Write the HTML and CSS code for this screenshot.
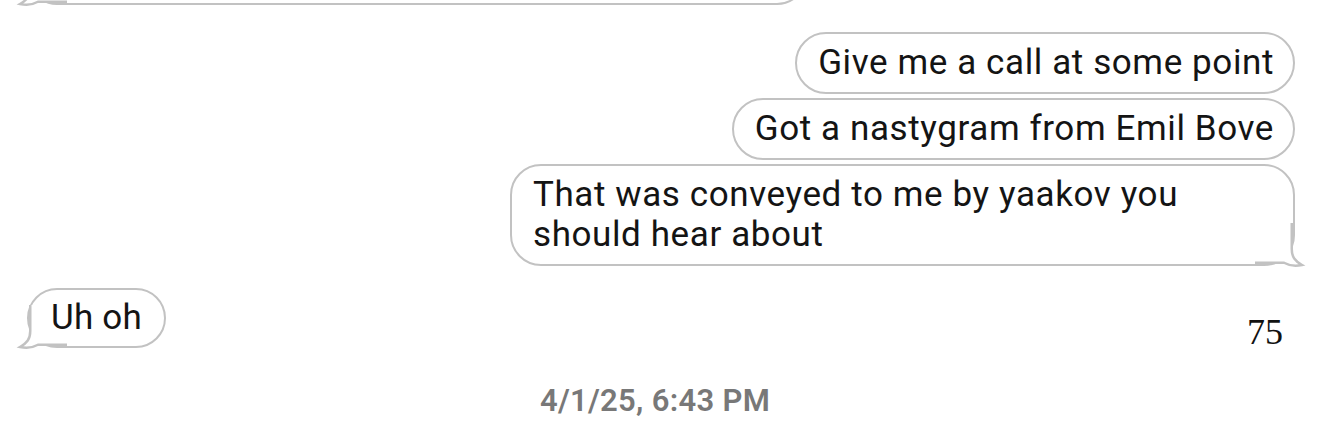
FILE: index.html
```html
<!DOCTYPE html>
<html>
<head>
<meta charset="utf-8">
<link rel="stylesheet" href="styles.css">
</head>
<body>
<div class="thread">
  <div class="row row-in">
    <div class="bubble bubble-cut">
      <svg class="tail tail-l" width="50" height="50" viewBox="0 0 50 50"><path class="tail-fill" d="M0 4 H36.75 V30 C36.75 38 40 42 47 46 C40 47.5 33 46 29 43.75 H0 Z"/><path class="tail-line" d="M36.75 4 V30 C36.75 38 40 42 47 46 C40 47.5 33 46 29 43.75 H0"/></svg>
    </div>
  </div>

  <div class="row row-out first-out">
    <div class="bubble"><span class="txt">Give me a call at some point</span></div>
  </div>
  <div class="row row-out tight">
    <div class="bubble"><span class="txt">Got a nastygram from Emil Bove</span></div>
  </div>
  <div class="row row-out tight">
    <div class="bubble bubble-wide">
      <span class="txt">That was conveyed to me by yaakov you should hear about</span>
      <svg class="tail tail-r" width="50" height="50" viewBox="0 0 50 50"><path class="tail-fill" d="M0 4 H36.75 V30 C36.75 38 40 42 47 46 C40 47.5 33 46 29 43.75 H0 Z"/><path class="tail-line" d="M36.75 4 V30 C36.75 38 40 42 47 46 C40 47.5 33 46 29 43.75 H0"/></svg>
    </div>
  </div>

  <div class="row row-in row-last">
    <div class="bubble bubble-small">
      <span class="txt">Uh oh</span>
      <svg class="tail tail-l" width="50" height="50" viewBox="0 0 50 50"><path class="tail-fill" d="M0 4 H36.75 V30 C36.75 38 40 42 47 46 C40 47.5 33 46 29 43.75 H0 Z"/><path class="tail-line" d="M36.75 4 V30 C36.75 38 40 42 47 46 C40 47.5 33 46 29 43.75 H0"/></svg>
    </div>
    <div class="page-num">75</div>
  </div>

  <div class="stamp">4/1/25, 6:43 PM</div>
</div>
</body>
</html>
```

FILE: styles.css
```css
html, body {
  margin: 0;
  padding: 0;
  background: #ffffff;
}

body {
  width: 1320px;
  height: 430px;
  overflow: hidden;
  font-family: Roboto, "Liberation Sans", Arial, sans-serif;
}

.thread {
  display: flex;
  flex-direction: column;
  padding: 0 25px 0 27px;
}

.row {
  display: flex;
}

.row-out {
  justify-content: flex-end;
}

.first-out {
  margin-top: 27px;
}

.tight {
  margin-top: 4px;
}

.bubble {
  position: relative;
  box-sizing: border-box;
  border: 2.5px solid #c2c2c2;
  border-radius: 31px;
  padding: 9px 19px 9px 21px;
  font-size: 35px;
  letter-spacing: 0.6px;
  line-height: 40px;
  color: #141414;
  background: #ffffff;
}

.txt {
  position: relative;
  z-index: 2;
}

.bubble-cut {
  width: 780px;
  height: 60px;
  margin-top: -55px;
}

.bubble-wide {
  width: 785px;
}

.row-last {
  margin-top: 22px;
  justify-content: space-between;
  align-items: flex-end;
}

.bubble-small {
  padding: 8px 22px 8px 22px;
  letter-spacing: 0.2px;
}

.tail {
  position: absolute;
  bottom: -5px;
  z-index: 1;
  overflow: visible;
}

.tail-r {
  right: -12px;
}

.tail-l {
  left: -12px;
  transform: scaleX(-1);
}

.tail-fill {
  fill: #ffffff;
}

.tail-line {
  fill: none;
  stroke: #c2c2c2;
  stroke-width: 2.5;
}

.page-num {
  font-family: "Liberation Serif", "Times New Roman", serif;
  font-size: 36px;
  line-height: 40px;
  color: #111111;
  margin-bottom: -4px;
  margin-right: 12px;
}

.stamp {
  margin-top: 34px;
  margin-right: 12px;
  text-align: center;
  font-size: 31px;
  letter-spacing: 0.3px;
  font-weight: 600;
  color: #787878;
}
```
